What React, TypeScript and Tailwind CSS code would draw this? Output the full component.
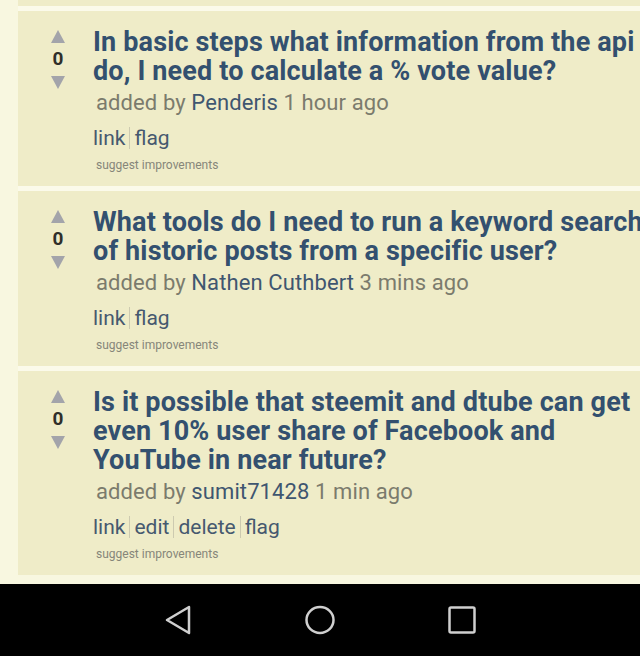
import React from "react";

type Question = {
  title: string;
  author: string;
  when: string;
  actions: string[];
};

const questions: Question[] = [
  {
    title: "In basic steps what information from the api do, I need to calculate a % vote value?",
    author: "Penderis",
    when: "1 hour ago",
    actions: ["link", "flag"],
  },
  {
    title: "What tools do I need to run a keyword search of historic posts from a specific user?",
    author: "Nathen Cuthbert",
    when: "3 mins ago",
    actions: ["link", "flag"],
  },
  {
    title: "Is it possible that steemit and dtube can get even 10% user share of Facebook and YouTube in near future?",
    author: "sumit71428",
    when: "1 min ago",
    actions: ["link", "edit", "delete", "flag"],
  },
];

function Arrow({ down }: { down?: boolean }) {
  return (
    <svg width="14" height="13" viewBox="0 0 14 13" className="block">
      {down ? (
        <polygon points="0,0 14,0 7,13" fill="#a3a4aa" />
      ) : (
        <polygon points="7,0 14,13 0,13" fill="#a3a4aa" />
      )}
    </svg>
  );
}

function QuestionCard({ q }: { q: Question }) {
  return (
    <div className="flex bg-[#efecc8] pl-[26px] pt-[17px] pb-[13px]">
      {/* votes */}
      <div className="flex w-[28px] shrink-0 flex-col items-center pt-[2px]">
        <Arrow />
        <span className="mt-[5px] text-[19px] leading-[21px] font-bold text-[#2f2f2a]">0</span>
        <div className="mt-[7px]">
          <Arrow down />
        </div>
      </div>

      <div className="ml-[21px] w-[557px] shrink-0">
        <h2 className="text-[27px] leading-[29px] font-bold tracking-[0.15px] text-[#33506f]">{q.title}</h2>
        <p className="mt-[3px] ml-[3px] text-[22px] leading-[28px] tracking-[0.1px] text-[#7b7b6d]">
          added by <span className="text-[#3f5670]">{q.author}</span> {q.when}
        </p>
        <div className="mt-[7px] flex items-center text-[21px] leading-[28px] text-[#46596f]">
          {q.actions.map((a, i) => (
            <React.Fragment key={a}>
              {i > 0 && <span className="mx-[4px] h-[22px] w-px bg-[#cdcab0]" />}
              <span>{a}</span>
            </React.Fragment>
          ))}
        </div>
        <p className="mt-[5px] ml-[3px] text-[12px] leading-[16px] text-[#86867a]">suggest improvements</p>
      </div>
    </div>
  );
}

export default function App() {
  return (
    <div className="flex h-[656px] w-[640px] flex-col overflow-hidden bg-[#f8f7e0] font-['Roboto',sans-serif]">
      <div className="flex-1 overflow-hidden pl-[18px]">
        <div className="flex w-[660px] flex-col gap-[5px] bg-[#fbfaea]">
          <div className="h-[6px] bg-[#efecc8]" />
          {questions.map((q) => (
            <QuestionCard key={q.author} q={q} />
          ))}
        </div>
      </div>

      {/* android nav bar */}
      <nav className="flex h-[72px] shrink-0 items-center justify-center gap-[112px] bg-black">
        <svg width="28" height="30" viewBox="0 0 28 30">
          <path d="M25 2 L3 15 L25 28 Z" fill="none" stroke="#cfcfcf" strokeWidth="2.5" strokeLinejoin="round" />
        </svg>
        <svg width="32" height="30" viewBox="0 0 32 30">
          <ellipse cx="16" cy="15" rx="13.5" ry="13" fill="none" stroke="#cfcfcf" strokeWidth="2.5" />
        </svg>
        <svg width="28" height="28" viewBox="0 0 28 28">
          <rect x="1.5" y="1.5" width="25" height="25" rx="1.5" fill="none" stroke="#cfcfcf" strokeWidth="2.5" />
        </svg>
      </nav>
    </div>
  );
}
